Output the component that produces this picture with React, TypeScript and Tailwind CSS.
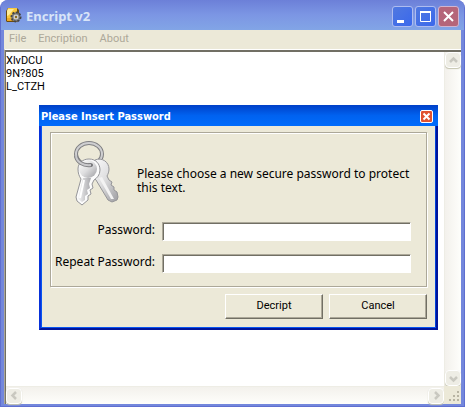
import { useState } from "react";
import type { ReactNode } from "react";

const MENUS = ["File", "Encription", "About"];

function AppIcon() {
  return (
    <svg width="17" height="17" viewBox="0 0 17 17" aria-hidden="true">
      <path d="M3 1h9l2 2v10l-2 2H2l-1-1V4z" fill="#6b4c10" />
      <path d="M3 1h9v12l-1 1H2V4z" fill="#f9c83c" />
      <path d="M3 2h6L4 8 2 9V4z" fill="#ffeb98" />
      <path d="M2 11h8v3H2z" fill="#eeaa28" />
      <circle cx="11" cy="10" r="4.5" fill="#777" stroke="#444" strokeWidth="2" strokeDasharray="2 1.4" />
      <circle cx="11" cy="10" r="3" fill="#d0d0d0" stroke="#888" />
      <circle cx="11" cy="10" r="1.2" fill="#8a6a20" />
    </svg>
  );
}

function KeysIcon() {
  return (
    <svg width="60" height="75" viewBox="0 0 60 75" aria-hidden="true">
      <defs>
        <linearGradient id="steel" x1="0" y1="0" x2="1" y2="1">
          <stop offset="0" stopColor="#ffffff" />
          <stop offset="0.5" stopColor="#dededf" />
          <stop offset="1" stopColor="#9c9ca0" />
        </linearGradient>
        <linearGradient id="blade" x1="0" y1="0" x2="1" y2="0">
          <stop offset="0" stopColor="#f4f4f4" />
          <stop offset="1" stopColor="#a8a8ac" />
        </linearGradient>
      </defs>
      <ellipse cx="24" cy="19" rx="13" ry="11" fill="none" stroke="#808083" strokeWidth="4" />
      <ellipse cx="24" cy="19" rx="13" ry="11" fill="none" stroke="#cfcfd1" strokeWidth="2" />
      <path
        d="M30 25C37 22 44 27 44 34C44 37 43 39 42 41L44 45L47 47L46 50L49 52L49 55L52 57L53 62L52 65L47 67L43 65L31 45L25 39Z"
        fill="url(#steel)"
        stroke="#959598"
      />
      <path d="M34 43L46 64L49 64L37 42Z" fill="#f3f3f3" />
      <path
        d="M13 34C13 28 18 24 24 24C31 24 35 29 35 35C35 40 32 43 29 45L27 49L28 53L25 55L26 59L23 61L23 65L17 70L12 66L11 62L16 44C14 41 13 38 13 34Z"
        fill="#fbfbfb"
        stroke="#959598"
      />
      <ellipse cx="23" cy="34" rx="9" ry="9" fill="url(#steel)" />
      <path d="M18 43L26 43L24 49L25 53L22 55L23 59L20 61L20 65L17 67L13 64Z" fill="url(#blade)" />
      <path d="M19 45L15 63" stroke="#fff" strokeWidth="2" />
      <ellipse cx="25" cy="30" rx="3" ry="2" fill="#77777a" />
      <path d="M11 21C12 27 18 31 26 30" fill="none" stroke="#808083" strokeWidth="4" />
      <path d="M11 21C12 27 18 31 26 30" fill="none" stroke="#c9c9cc" strokeWidth="2" />
    </svg>
  );
}

type CaptionProps = { label: string; tone: string; children: ReactNode };

function CaptionButton({ label, tone, children }: CaptionProps) {
  return (
    <button
      aria-label={label}
      className={`flex size-[21px] items-center justify-center rounded-[3px] border ${tone}`}
    >
      <svg width="19" height="19" viewBox="0 0 19 19" fill="none" stroke="#fff" aria-hidden="true">
        {children}
      </svg>
    </button>
  );
}

const BLUE_TONE = "border-[#aebcf0] bg-linear-to-br from-[#5078e0] to-[#3a68ec]";

const ARROWS = {
  up: "M4 9L7.5 5.5L11 9",
  down: "M4 6L7.5 9.5L11 6",
  left: "M9 4L5.5 7.5L9 11",
  right: "M6 4L9.5 7.5L6 11",
};

function ScrollButton({ dir }: { dir: keyof typeof ARROWS }) {
  return (
    <button
      aria-label={`Scroll ${dir}`}
      className="flex size-4 shrink-0 items-center justify-center rounded-sm border border-white bg-[#eeede5] shadow-[0_1px_1px_#c5c5b0]"
    >
      <svg width="15" height="15" viewBox="0 0 15 15" className="shrink-0" aria-hidden="true">
        <path d={ARROWS[dir]} fill="none" stroke="#c9c8c0" strokeWidth="2.5" />
      </svg>
    </button>
  );
}

const BEVEL_BUTTON =
  "h-[25px] w-[98px] border border-t-white border-r-[#716f64] border-b-[#716f64] border-l-white bg-[#ece9d8] font-[Roboto,sans-serif] text-[11px] shadow-[inset_-1px_-1px_0_#aca899]";

function PasswordRow({ id, label }: { id: string; label: string }) {
  const [value, setValue] = useState("");

  return (
    <div className="flex gap-[7px]">
      <label htmlFor={id} className="w-[100px] shrink-0 text-right leading-4 whitespace-nowrap">
        {label}
      </label>
      <input
        id={id}
        type="password"
        value={value}
        onChange={(e) => setValue(e.target.value)}
        className="h-[19px] min-w-0 flex-1 border border-t-[#aca899] border-r-white border-b-white border-l-[#aca899] bg-white px-1 shadow-[inset_1px_1px_0_#716f64] outline-none"
      />
    </div>
  );
}

function PasswordDialog() {
  return (
    <div
      role="dialog"
      aria-labelledby="dialog-title"
      className="absolute top-[105px] right-[26px] left-[38px] border-x-2 border-b-2 border-r-[#00149a] border-b-[#00149a] border-l-[#0831d9] bg-[#ece9d8] font-['Noto_Sans',sans-serif] text-xs shadow-[inset_1px_-1px_0_#0855f0,inset_-1px_0_0_#0040d8]"
    >
      <div className="-mx-[2px] flex h-[21px] items-center justify-between bg-linear-to-b from-[#0040c8] via-[#0062f0] to-[#006cfc] pr-[5px] pl-[2px]">
        <h2
          id="dialog-title"
          className="pt-1 font-['DejaVu_Sans_Condensed','DejaVu_Sans',sans-serif] text-[11px] font-bold text-white"
        >
          Please Insert Password
        </h2>
        <button
          aria-label="Close"
          className="mt-[2px] flex size-[13px] items-center justify-center rounded-xs border border-white bg-[#e0522f]"
        >
          <svg width="11" height="11" viewBox="0 0 11 11" aria-hidden="true">
            <path d="M2.5 2.5L8.5 8.5M8.5 2.5L2.5 8.5" stroke="#fff" strokeWidth="2" />
          </svg>
        </button>
      </div>

      <form className="px-[9px] pt-[6px] pb-[9px]" onSubmit={(e) => e.preventDefault()}>
        <div className="h-[155px] border border-[#aca899] pr-[15px] pl-1 shadow-[inset_1px_1px_0_#fff,1px_1px_0_#fff]">
          <div className="flex h-[89px] pl-[10px]">
            <div className="w-[72px] shrink-0 pt-[2px]">
              <KeysIcon />
            </div>
            <p className="pt-[34px] leading-[14px] whitespace-nowrap">
              Please choose a new secure password to protect
              <br />
              this text.
            </p>
          </div>
          <div className="flex flex-col gap-[13px]">
            <PasswordRow id="password" label="Password:" />
            <PasswordRow id="repeat" label="Repeat Password:" />
          </div>
        </div>

        <div className="flex justify-end gap-[6px] pt-[7px]">
          <button type="submit" className={BEVEL_BUTTON}>
            Decript
          </button>
          <button type="button" className={BEVEL_BUTTON}>
            Cancel
          </button>
        </div>
      </form>
    </div>
  );
}

export default function App() {
  const [text, setText] = useState("XlvDCU\n9N?805\nL_CTZH");

  return (
    <div className="relative flex h-screen flex-col overflow-hidden rounded-t-lg border-x border-b border-[#5f6fd0] bg-[#7387dc] font-[Roboto,sans-serif] text-black">
      {/* Title bar */}
      <header className="flex h-[30px] shrink-0 items-center bg-linear-to-b from-[#6c80d8] via-[#7c96e4] to-[#82a5e6] pr-[5px] pl-1">
        <AppIcon />
        <h1 className="ml-1 flex-1 pt-1 font-['Noto_Sans',sans-serif] text-[13px] font-bold text-[#d8e4f8]">
          Encript v2
        </h1>
        <div className="flex gap-[2px] pt-[2px]">
          <CaptionButton label="Minimize" tone={BLUE_TONE}>
            <path d="M4 14.5h7" strokeWidth="3" />
          </CaptionButton>
          <CaptionButton label="Maximize" tone={BLUE_TONE}>
            <path d="M4.5 5v9.5h10V5M4 5.5h11" />
            <path d="M4 5h11" strokeWidth="2" />
          </CaptionButton>
          <CaptionButton label="Close" tone="border-[#d0b4d0] bg-[#b5657a]">
            <path d="M5 5L14 14M14 5L5 14" strokeWidth="2" />
          </CaptionButton>
        </div>
      </header>

      <div className="mx-[3px] mb-[2px] flex min-h-0 flex-1 flex-col bg-[#ece9d8]">
        <nav className="flex h-[19px] shrink-0 items-center gap-3 pl-[5px] text-[11px] text-[#aca899]">
          {MENUS.map((menu) => (
            <button key={menu}>{menu}</button>
          ))}
        </nav>

        {/* Editor with its scroll bars */}
        <div className="flex min-h-0 flex-1 border-t border-l border-t-white border-l-[#aca899]">
          <div className="flex min-h-0 flex-1 flex-col border-t-2 border-l border-[#716f64] bg-white">
            <div className="flex min-h-0 flex-1">
              <textarea
                aria-label="Text"
                value={text}
                onChange={(e) => setText(e.target.value)}
                className="min-w-0 flex-1 resize-none overflow-hidden bg-white pt-[2px] text-[11px] leading-[13px] outline-none"
              />
              <div className="flex w-[17px] flex-col items-center justify-between border-l border-[#eeede5] bg-linear-to-r from-[#f3f1ec] to-[#fefefb]">
                <ScrollButton dir="up" />
                <ScrollButton dir="down" />
              </div>
            </div>
            <div className="flex h-[18px] shrink-0">
              <div className="flex flex-1 items-center justify-between border-t border-[#eeede5] bg-linear-to-b from-[#f3f1ec] to-[#fefefb]">
                <ScrollButton dir="left" />
                <ScrollButton dir="right" />
              </div>
              <svg width="17" height="18" viewBox="0 0 17 18" className="bg-[#ece9d8]" aria-hidden="true">
                <path
                  d="M13 5h2v2h-2zM13 9h2v2h-2zM9 9h2v2h-2zM13 13h2v2h-2zM9 13h2v2h-2zM5 13h2v2h-2z"
                  fill="#b8b4a2"
                />
              </svg>
            </div>
          </div>
        </div>
      </div>

      <PasswordDialog />
    </div>
  );
}
